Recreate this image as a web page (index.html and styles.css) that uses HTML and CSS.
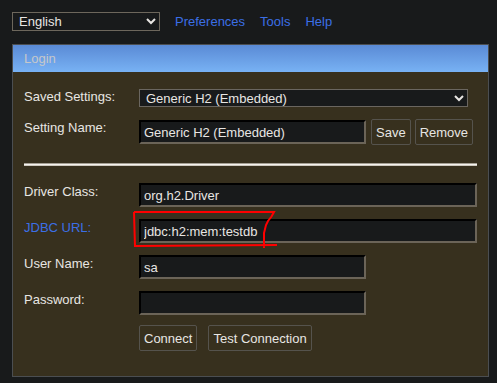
FILE: index.html
```html
<!DOCTYPE html>
<html>

<head>
    <title>H2 Console</title>

    <link rel="stylesheet" href="styles.css">
</head>

<body>
    <div class="topBar">
        <select class="langSelect">
            <option>English</option>
        </select>
        <a class="topLink" href="#">Preferences</a>
        <a class="topLink" href="#">Tools</a>
        <a class="topLink" href="#">Help</a>
    </div>

    <div class="panel">
        <div class="panelHead">Login</div>
        <div class="panelBody">
            <div class="row">
                <div class="label first">Saved Settings:</div>
                <select class="settingSelect">
                    <option>Generic H2 (Embedded)</option>
                </select>
            </div>
            <div class="row gapSmall">
                <div class="label">Setting Name:</div>
                <div class="fieldGroup">
                    <input class="field short" type="text" value="Generic H2 (Embedded)">
                    <button class="btn">Save</button>
                    <button class="btn remove">Remove</button>
                </div>
            </div>

            <div class="separator"></div>

            <div class="row">
                <div class="label">Driver Class:</div>
                <input class="field wide" type="text" value="org.h2.Driver">
            </div>
            <div class="row gapField">
                <div class="label link">JDBC URL:</div>
                <input class="field wide" type="text" value="jdbc:h2:mem:testdb">
            </div>
            <div class="row gapField">
                <div class="label">User Name:</div>
                <input class="field short" type="text" value="sa">
            </div>
            <div class="row gapField">
                <div class="label">Password:</div>
                <input class="field short" type="password" value="">
            </div>
            <div class="row buttons">
                <div class="label"></div>
                <button class="btn">Connect</button>
                <button class="btn">Test Connection</button>
            </div>
        </div>
    </div>

    <!-- red hand-drawn mark over the JDBC URL field -->
    <svg class="scribble" width="497" height="383" viewBox="0 0 497 383">
        <path d="M134,212 L274,212 L271.5,216.5 L268,221 L266,225 L264,233 L264,248
                 M134,212 L134.5,230 L135,246 L277,245" fill="none" stroke="#f00" stroke-width="2" />
    </svg>
</body>

</html>
```
FILE: styles.css
```css
body {
    font-family: "Liberation Sans", Arial, sans-serif;
    font-size: 13px;
    color: #e8e6e3;
    background: #181a1b;
    margin: 0;
    position: relative;
}

.topBar {
    display: flex;
    align-items: center;
    gap: 15px;
    padding: 12px 0 0 12px;
}

.langSelect {
    width: 148px;
    height: 19px;
    font-family: inherit;
    font-size: 13px;
    color: #e8e6e3;
    background-color: #181a1b;
    border: 1px solid #6d675c;
    border-radius: 0;
    color-scheme: dark;
    padding: 0 0 0 2px;
    margin: 0;
}

.topLink {
    color: #3b6fe6;
    text-decoration: none;
}

.panel {
    margin: 13px 0 0 12px;
    width: 475px;
    border: 1px solid #4b4e51;
}

.panelHead {
    height: 27px;
    line-height: 27px;
    padding-left: 11px;
    color: #c6c8ca;
    background: linear-gradient(#5a8ad5, #78b2f4);
}

.panelBody {
    background: #37301e;
    padding: 17px 11px 25px 11px;
}

.row {
    display: flex;
    align-items: flex-start;
}

.gapSmall {
    margin-top: 12px;
}

.gapField {
    margin-top: 12px;
}

.label {
    width: 115px;
    flex-shrink: 0;
    line-height: 15px;
    padding-top: 1px;
}

.label.first {
    padding-top: 0;
}

.label.link {
    color: #3b6fe6;
}

.settingSelect {
    width: 329px;
    height: 18px;
    font-family: inherit;
    font-size: 13px;
    color: #e8e6e3;
    background-color: #181a1b;
    border: 1px solid #6a6660;
    border-radius: 0;
    color-scheme: dark;
    padding: 0 0 0 2px;
    margin: 0;
}

.fieldGroup {
    display: flex;
    align-items: center;
}

.field {
    box-sizing: border-box;
    height: 24px;
    font-family: inherit;
    font-size: 13px;
    color: #e8e6e3;
    background: #181a1b;
    border: 2px inset;
    border-color: #111213 #6b6458 #6b6458 #111213;
    padding: 0 3px;
    margin: 0;
    outline: none;
}

.field.short {
    width: 227px;
}

.field.wide {
    width: 338px;
}

.fieldGroup .btn {
    margin-left: 5px;
}

.fieldGroup .btn.remove {
    margin-left: 4px;
}

.btn {
    height: 26px;
    font-family: inherit;
    font-size: 13px;
    color: #e8e6e3;
    background: transparent;
    border: 1px solid #55534d;
    border-radius: 2px;
    padding: 0 4px;
    margin: 0;
}

.separator {
    margin: 18px 0 17px 0;
    height: 1px;
    background: #f4f2ee;
    border-top: 1px solid #a49f94;
    border-bottom: 1px solid #cfcac0;
}

.buttons {
    margin-top: 10px;
}

.buttons .btn + .btn {
    margin-left: 11px;
}

.scribble {
    position: absolute;
    left: 0;
    top: 0;
    pointer-events: none;
}
```
